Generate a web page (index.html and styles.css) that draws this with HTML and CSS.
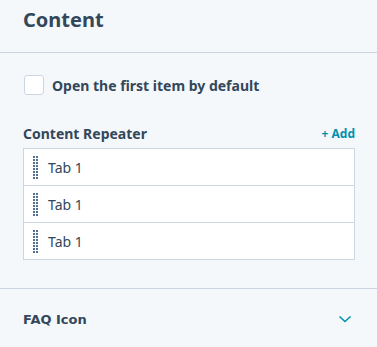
FILE: index.html
```html
<!DOCTYPE html>
<html>
<head>
<meta charset="utf-8">
<link rel="stylesheet" href="styles.css">
</head>
<body>
<div class="panel">
  <div class="header"><h1 class="title">Content</h1></div>
  <div class="section">
    <label class="check">
      <span class="box"></span>
      <span class="check-label">Open the first item by default</span>
    </label>
    <div class="repeater-head">
      <span class="repeater-title">Content Repeater</span>
      <span class="add">+ Add</span>
    </div>
    <div class="list">
      <div class="row"><svg class="handle" width="5" height="23" viewBox="0 0 5 23"><path d="M0 0h2v2H0zM3 0h2v2H3zM0 3h2v2H0zM3 3h2v2H3zM0 6h2v2H0zM3 6h2v2H3zM0 9h2v2H0zM3 9h2v2H3zM0 12h2v2H0zM3 12h2v2H3zM0 15h2v2H0zM3 15h2v2H3zM0 18h2v2H0zM3 18h2v2H3zM0 21h2v2H0zM3 21h2v2H3z" fill="#516f90"/></svg><span class="tab">Tab 1</span></div>
      <div class="row"><svg class="handle" width="5" height="23" viewBox="0 0 5 23"><path d="M0 0h2v2H0zM3 0h2v2H3zM0 3h2v2H0zM3 3h2v2H3zM0 6h2v2H0zM3 6h2v2H3zM0 9h2v2H0zM3 9h2v2H3zM0 12h2v2H0zM3 12h2v2H3zM0 15h2v2H0zM3 15h2v2H3zM0 18h2v2H0zM3 18h2v2H3zM0 21h2v2H0zM3 21h2v2H3z" fill="#516f90"/></svg><span class="tab">Tab 1</span></div>
      <div class="row"><svg class="handle" width="5" height="23" viewBox="0 0 5 23"><path d="M0 0h2v2H0zM3 0h2v2H3zM0 3h2v2H0zM3 3h2v2H3zM0 6h2v2H0zM3 6h2v2H3zM0 9h2v2H0zM3 9h2v2H3zM0 12h2v2H0zM3 12h2v2H3zM0 15h2v2H0zM3 15h2v2H3zM0 18h2v2H0zM3 18h2v2H3zM0 21h2v2H0zM3 21h2v2H3z" fill="#516f90"/></svg><span class="tab">Tab 1</span></div>
    </div>
  </div>
  <div class="faq">
    <span class="faq-title">FAQ Icon</span>
    <svg class="chev" width="14" height="8" viewBox="0 0 14 8"><path d="M1.5 1.5 L7 6.5 L12.5 1.5" fill="none" stroke="#0091ae" stroke-width="1.6"/></svg>
  </div>
</div>
</body>
</html>
```
FILE: styles.css
```css
html, body { margin: 0; padding: 0; }
body {
  background: #f5f8fa;
  font-family: "Noto Sans", "Liberation Sans", sans-serif;
  color: #33475b;
  width: 377px;
  height: 347px;
  overflow: hidden;
}
.header {
  height: 53px;
  border-bottom: 1px solid #cbd6e2;
  padding: 0 23px;
  box-sizing: border-box;
}
.title {
  margin: 0;
  font-size: 20px;
  font-weight: 700;
  line-height: 40px;
}
.section {
  padding: 22px 22px 28px 23px;
  border-bottom: 1px solid #cbd6e2;
}
.check {
  display: flex;
  align-items: center;
  gap: 8px;
  height: 20px;
  padding-left: 1px;
}
.box {
  width: 18px;
  height: 18px;
  background: #fff;
  border: 1px solid #cbd6e2;
  border-radius: 3px;
}
.check-label {
  font-size: 14px;
  font-weight: 700;
}
.repeater-head {
  margin-top: 28px;
  display: flex;
  justify-content: space-between;
  align-items: center;
  height: 20px;
}
.repeater-title { font-size: 14px; font-weight: 700; }
.add { font-size: 12px; font-weight: 700; color: #0091ae; }
.list {
  margin-top: 5px;
  background: #fff;
  border: 1px solid #cbd6e2;
}
.row {
  height: 36px;
  display: flex;
  align-items: center;
  padding-left: 9px;
}
.row + .row { border-top: 1px solid #cbd6e2; }
.handle { display: block; flex: none; }
.tab {
  margin-left: 10px;
  font-size: 14px;
}
.faq {
  display: flex;
  justify-content: space-between;
  align-items: center;
  padding: 0 25px 0 23px;
  height: 60px;
}
.faq-title {
  font-family: "DejaVu Sans", Verdana, sans-serif;
  font-size: 13px;
  font-weight: 700;
}
.chev { display: block; }
```
